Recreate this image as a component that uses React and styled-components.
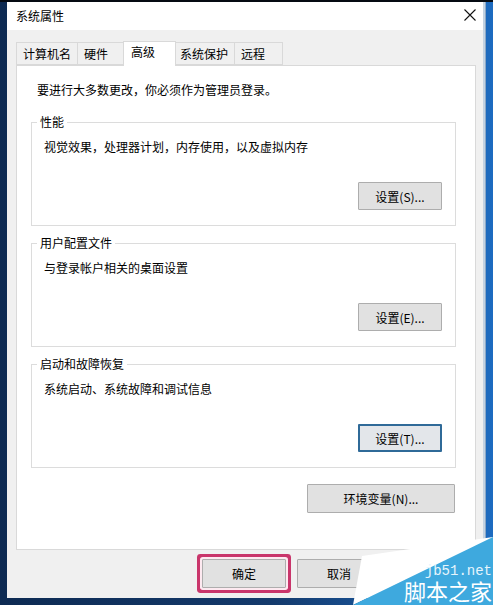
import React from 'react';
import styled, { createGlobalStyle } from 'styled-components';

const GlobalStyle = createGlobalStyle`
  * { box-sizing: border-box; }
  body {
    margin: 0;
    overflow: hidden;
    font-family: "Noto Sans CJK SC", "Microsoft YaHei", sans-serif;
    font-size: 12px;
    color: #000;
  }
`;

const tabs = [
  { label: '计算机名' },
  { label: '硬件' },
  { label: '高级', active: true },
  { label: '系统保护' },
  { label: '远程' },
];

const groups = [
  { title: '性能', desc: '视觉效果，处理器计划，内存使用，以及虚拟内存', button: '设置(S)...' },
  { title: '用户配置文件', desc: '与登录帐户相关的桌面设置', button: '设置(E)...' },
  { title: '启动和故障恢复', desc: '系统启动、系统故障和调试信息', button: '设置(T)...', focused: true },
];

export default function App() {
  return (
    <Desktop>
      <GlobalStyle />
      <Window>
        <TitleBar>
          <Title>系统属性</Title>
          <CloseIcon width="12" height="12" viewBox="0 0 12 12">
            <path d="M0.5 0.5 L11.5 11.5 M11.5 0.5 L0.5 11.5" stroke="#111" strokeWidth="1.1" />
          </CloseIcon>
        </TitleBar>
        <TabRow>
          {tabs.map((t) => (
            <Tab key={t.label} $active={t.active}>
              {t.label}
            </Tab>
          ))}
        </TabRow>
        <Panel>
          <Intro>要进行大多数更改，你必须作为管理员登录。</Intro>
          {groups.map((g) => (
            <Group key={g.title}>
              <Legend>{g.title}</Legend>
              <Desc>{g.desc}</Desc>
              <GroupButton $focused={g.focused}>{g.button}</GroupButton>
            </Group>
          ))}
          <EnvButton>环境变量(N)...</EnvButton>
        </Panel>
        <Footer>
          <Button $highlight>确定</Button>
          <Button>取消</Button>
          {/* 应用 sits under the watermark, its label is not visible */}
          <Button aria-label="应用" />
        </Footer>
      </Window>
      <Watermark>
        <WatermarkShape width="140" height="70" viewBox="0 0 140 70">
          <polygon points="0,70 9,21 140,2 140,3" fill="#ffffff" />
          <polygon points="0,70 140,2 140,70" fill="#3ea9de" />
        </WatermarkShape>
        <WmSite>jb51.net</WmSite>
        <WmName>脚本之家</WmName>
      </Watermark>
    </Desktop>
  );
}

const Desktop = styled.div`
  position: relative;
  min-height: 605px;
  padding: 2px 0 0 7px;
  background:
    linear-gradient(#050a12 0 2px, transparent 2px),
    linear-gradient(90deg, #0d2a52 0%, #143a6c 55%, #1d6bc0 100%);
`;

const Window = styled.div`
  width: 476px;
  height: 596px;
  background: #f0f0f0;
  display: flex;
  flex-direction: column;
  box-shadow: 2px 0 0 #c3d2e2, 3px 0 0 #8ba8c6;
`;

const TitleBar = styled.div`
  height: 28px;
  background: #fff;
  display: flex;
  align-items: center;
  justify-content: space-between;
  padding: 0 7px 0 9px;
`;

const Title = styled.span`
  font-size: 12px;
  line-height: 16px;
  margin-top: -1px;
`;

const CloseIcon = styled.svg`
  display: block;
  margin-top: -3px;
`;

const TabRow = styled.div`
  display: flex;
  align-items: flex-end;
  padding: 11px 0 0 9px;
`;

const Tab = styled.div`
  position: relative;
  min-width: ${(p) => (p.$active ? '53px' : '49px')};
  height: ${(p) => (p.$active ? '25px' : '23px')};
  padding: ${(p) => (p.$active ? '2px 6px 0 7px' : '3px 6px 0 6px')};
  margin: ${(p) => (p.$active ? '0 -2px -1px -3px' : '0 0 0 -1px')};
  border: 1px solid #d9d9d9;
  border-bottom: ${(p) => (p.$active ? 'none' : '1px solid #d9d9d9')};
  background: ${(p) => (p.$active ? '#fff' : '#f0f0f0')};
  z-index: ${(p) => (p.$active ? 2 : 1)};
  line-height: 16px;
  white-space: nowrap;
  &:first-child {
    margin-left: 0;
  }
`;

const Panel = styled.div`
  margin: 0 7px 0 9px;
  height: 485px;
  background: #fff;
  border: 1px solid #d9d9d9;
  border-top: none;
  box-shadow: inset 0 1px 0 #d9d9d9;
  padding: 17px 19px 0 14px;
  display: flex;
  flex-direction: column;
`;

const Intro = styled.div`
  line-height: 16px;
  margin: 0 0 24px 6px;
`;

const Group = styled.div`
  height: 104px;
  border: 1px solid #dcdcdc;
  display: flex;
  flex-direction: column;
  padding-bottom: 15px;
  margin-bottom: 17px;
  &:last-of-type {
    margin-bottom: 16px;
  }
`;

const Legend = styled.span`
  align-self: flex-start;
  margin: -9px 0 0 5px;
  padding: 0 3px;
  background: #fff;
  line-height: 16px;
`;

const Desc = styled.div`
  line-height: 16px;
  margin: 9px 0 0 12px;
`;

const Button = styled.button`
  width: 84px;
  height: 29px;
  padding: 0;
  border: 1px solid #adadad;
  border-radius: 1px;
  background: #e1e1e1;
  font-family: inherit;
  font-size: 12px;
  color: #000;
  box-shadow: ${(p) => (p.$highlight ? '0 0 0 2px #fde9f0, 0 0 0 5px #c9356b' : 'none')};
`;

const GroupButton = styled(Button)`
  height: 28px;
  margin-top: auto;
  align-self: flex-end;
  margin-right: 13px;
  border: ${(p) => (p.$focused ? '2px solid #2f6a98' : '1px solid #adadad')};
  background: ${(p) => (p.$focused ? '#e3e6ea' : '#e1e1e1')};
`;

const EnvButton = styled(Button)`
  width: 148px;
  align-self: flex-end;
  margin-right: 1px;
`;

const Footer = styled.div`
  display: flex;
  justify-content: flex-end;
  gap: 11px;
  padding: 9px 7px 0 0;
`;

const Watermark = styled.div`
  position: absolute;
  right: 0;
  bottom: 0;
  width: 140px;
  height: 70px;
  padding: 0 1px 3px 0;
  display: flex;
  flex-direction: column;
  align-items: flex-end;
  justify-content: flex-end;
  gap: 1px;
  color: #fff;
`;

const WatermarkShape = styled.svg`
  position: absolute;
  left: 0;
  top: 0;
  display: block;
`;

const WmSite = styled.span`
  position: relative;
  font-family: "Liberation Mono", monospace;
  font-size: 14px;
  line-height: 13px;
  color: #e6f5fc;
`;

const WmName = styled.span`
  position: relative;
  font-size: 22px;
  line-height: 23px;
`;
